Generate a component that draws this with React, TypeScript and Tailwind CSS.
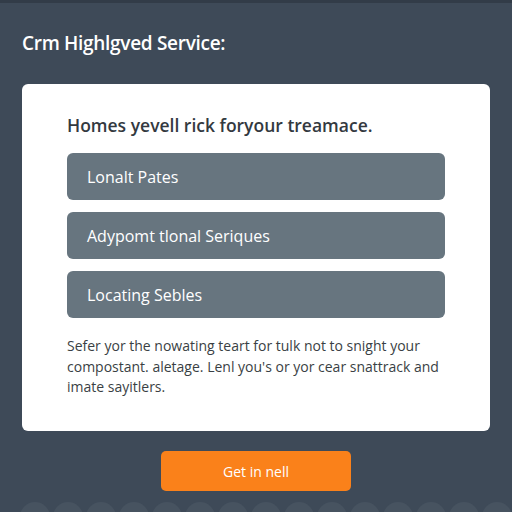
import React from "react";

const services = ["Lonalt Pates", "Adypomt tlonal Seriques", "Locating Sebles"];

const App = () => {
  return (
    <div
      className="w-[512px] h-[512px] overflow-hidden bg-[#3e4a58] flex flex-col"
      style={{ fontFamily: '"Open Sans", "Noto Sans", sans-serif' }}
    >
      <div className="h-[3px] shrink-0 bg-[#323c48]" />
      <h1 className="shrink-0 mt-[28px] ml-[22px] text-[19px] leading-[24px] font-semibold text-white tracking-[-0.3px]">
        Crm Highlgved Service:
      </h1>

      <main className="shrink-0 mt-[29px] mx-[22px] h-[347px] bg-white rounded-[6px] px-[45px] pt-[29px]">
        <h2 className="text-[17.5px] leading-[24px] font-semibold text-[#33393f]">
          Homes yevell rick foryour treamace.
        </h2>
        <div className="mt-[16px] flex flex-col gap-[12px]">
          {services.map((s) => (
            <div
              key={s}
              className="h-[47px] rounded-[6px] bg-[#67757f] flex items-center px-[20px] text-[16px] text-white"
            >
              {s}
            </div>
          ))}
        </div>
        <p className="mt-[18px] text-[14px] leading-[20.5px] text-[#3a3f44]">
          Sefer yor the nowating teart for tulk not to snight your compostant. aletage. Lenl you's or yor cear snattrack and imate sayitlers.
        </p>
      </main>

      <div className="shrink-0 mt-[20px] flex justify-center">
        <button className="w-[190px] h-[40px] rounded-[5px] bg-[#fa811a] text-white text-[14px] font-medium">
          Get in nell
        </button>
      </div>

      {/* scalloped band along the bottom edge */}
      <div className="shrink-0 mt-[11px] ml-[20px] flex gap-[3px]">
        {Array.from({ length: 15 }).map((_, i) => (
          <div key={i} className="w-[30px] h-[30px] shrink-0 rounded-full bg-[#475360]" />
        ))}
      </div>
    </div>
  );
};

export default App;
